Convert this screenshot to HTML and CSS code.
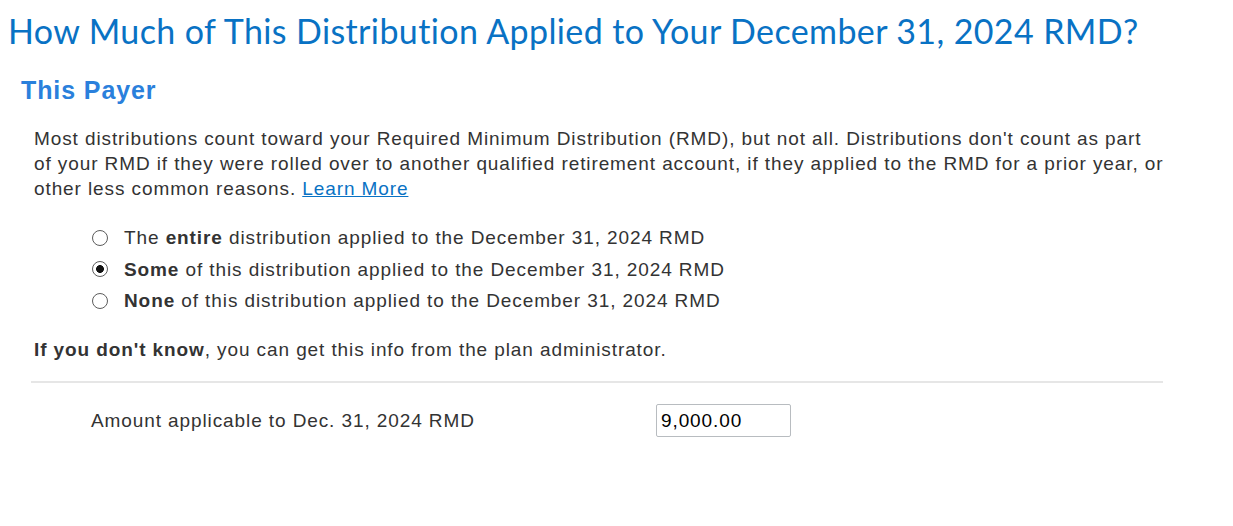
FILE: index.html
```html
<!DOCTYPE html>
<html lang="en">
<head>
  <meta charset="UTF-8" />
  <title>RMD Distribution</title>
  <link rel="stylesheet" href="styles.css">
</head>
<body>
  <h1 class="page-title">How Much of This Distribution Applied to Your December 31, 2024 RMD?</h1>

  <div class="section">
    <h2 class="payer">This Payer</h2>

    <p class="intro">Most distributions count toward your Required Minimum Distribution (RMD), but not all. Distributions don't count as part<br>
      of your RMD if they were rolled over to another qualified retirement account, if they applied to the RMD for a prior year, or<br>
      other less common reasons. <a href="#">Learn More</a></p>

    <div class="choices">
      <label class="choice"><input type="radio" name="rmd" /> <span>The <b>entire</b> distribution applied to the December 31, 2024 RMD</span></label>
      <label class="choice"><input type="radio" name="rmd" checked /> <span><b>Some</b> of this distribution applied to the December 31, 2024 RMD</span></label>
      <label class="choice"><input type="radio" name="rmd" /> <span><b>None</b> of this distribution applied to the December 31, 2024 RMD</span></label>
    </div>

    <p class="note"><b>If you don't know</b>, you can get this info from the plan administrator.</p>

    <div class="divider"></div>

    <div class="amount-row">
      <span class="amount-label">Amount applicable to Dec. 31, 2024 RMD</span>
      <input class="amount-input" type="text" value="9,000.00" />
    </div>
  </div>
</body>
</html>
```

FILE: styles.css
```css
body {
  margin: 0;
  padding: 0 8px;
  background: #fff;
  font-family: "Liberation Sans", Arial, sans-serif;
  color: #333;
}
.page-title {
  margin: 0;
  padding-top: 11px;
  font-family: Lato, "Open Sans", sans-serif;
  font-weight: 400;
  font-size: 34px;
  line-height: 40px;
  letter-spacing: 0.38px;
  color: #0972c4;
}
.section {
  width: 1155px;
}
.payer {
  margin: 24px 0 0 13px;
  font-size: 25px;
  line-height: 30px;
  font-weight: bold;
  letter-spacing: 0.9px;
  color: #2a80dc;
}
.intro {
  margin: 21px -40px 0 26px;
  font-size: 19px;
  line-height: 25px;
  letter-spacing: 0.9px;
}
.intro a {
  color: #0972c4;
}
.choices {
  margin: 24px 0 0 84px;
  display: flex;
  flex-direction: column;
  gap: 6.5px;
}
.choice {
  display: flex;
  align-items: center;
  font-size: 19px;
  line-height: 25px;
  letter-spacing: 0.9px;
}
.choice input {
  appearance: none;
  width: 16px;
  height: 16px;
  margin: 0 16px 0 0;
  border: 1px solid #5c5c5c;
  border-radius: 50%;
  background: #fff;
}
.choice input:checked {
  background: radial-gradient(circle, #111 0 3.6px, #fff 4.2px);
}
.note {
  margin: 24px 0 0 26px;
  font-size: 19px;
  line-height: 25px;
  letter-spacing: 0.9px;
}
.divider {
  margin: 19px 0 0 23px;
  border-top: 2px solid #e6e6e6;
}
.amount-row {
  display: flex;
  align-items: center;
  margin: 21px 0 0 83px;
}
.amount-label {
  width: 565px;
  font-size: 19px;
  letter-spacing: 0.9px;
}
.amount-input {
  box-sizing: border-box;
  width: 135px;
  height: 33px;
  border: 1px solid #b8bcc0;
  border-radius: 2px;
  padding: 0 4px;
  font-family: "Liberation Sans", Arial, sans-serif;
  font-size: 19px;
  letter-spacing: 0.9px;
  color: #000;
}
```
